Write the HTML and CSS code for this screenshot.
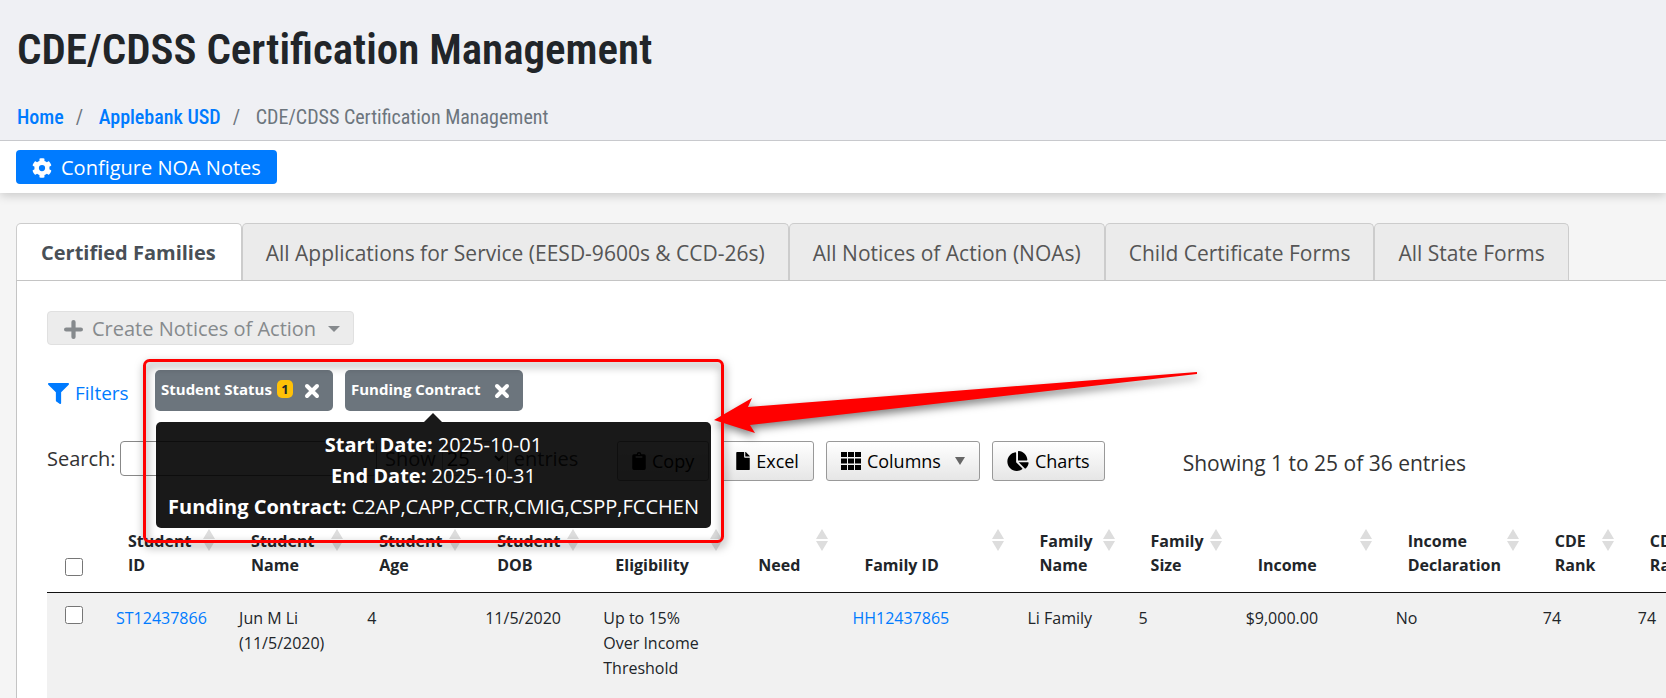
FILE: index.html
```html
<!DOCTYPE html>
<html lang="en">
	<head>
		<meta charset="utf-8">
		<title>CDE/CDSS Certification Management</title>
		<link rel="stylesheet" href="styles.css">
	</head>
	<body>
		<header class="page-head">
			<h1>CDE/CDSS Certification Management</h1>
			<nav class="breadcrumb">
				<a href="#">Home</a>
				<span class="slash">/</span>
				<a href="#">Applebank USD</a>
				<span class="slash">/</span>
				<span>CDE/CDSS Certification Management</span>
			</nav>
		</header>
		<div class="toolbar">
			<button type="button" class="btn btn-primary">
				<svg class="icon-gear" viewBox="0 0 512 512"><path fill="currentColor" d="M487 316l-43-25a194 194 0 0 0 0-70l43-25c5-3 7-9 6-14-11-36-30-69-55-95-4-5-10-6-15-3l-43 25a192 192 0 0 0-61-35V24c0-6-4-11-9-12-37-8-75-8-110 0-5 1-9 6-9 12v50a194 194 0 0 0-61 35L87 84c-5-3-11-2-15 3-25 26-44 59-55 95-2 5 0 11 5 14l43 25a194 194 0 0 0 0 70l-43 25c-5 3-7 9-5 14 11 36 30 69 55 95 4 5 10 6 15 3l43-25c18 15 38 27 61 35v50c0 6 4 11 9 12 37 8 75 8 110 0 5-1 9-6 9-12v-50a194 194 0 0 0 61-35l43 25c5 3 11 2 15-3 25-26 44-59 55-95 1-5-1-11-6-14zM256 336a80 80 0 1 1 0-160 80 80 0 0 1 0 160z"/></svg>
				Configure NOA Notes
			</button>
		</div>
		<main class="content">
			<nav class="tabs">
				<a href="#" class="tab active">Certified Families</a>
				<a href="#" class="tab">All Applications for Service (EESD-9600s &amp; CCD-26s)</a>
				<a href="#" class="tab">All Notices of Action (NOAs)</a>
				<a href="#" class="tab">Child Certificate Forms</a>
				<a href="#" class="tab">All State Forms</a>
			</nav>
			<section class="panel">
				<button type="button" class="btn btn-create" disabled>
					<svg class="icon-plus" viewBox="0 0 18 18"><path fill="none" stroke="currentColor" stroke-width="4" stroke-linecap="round" d="M9 2v14M2 9h14"/></svg>
					Create Notices of Action
					<span class="caret"></span>
				</button>
				<div class="filters">
					<a href="#" class="filter-link">
						<svg class="icon-filter" viewBox="0 0 512 512"><path fill="currentColor" d="M488 0H24C3 0-8 26 7 41l185 185v206c0 8 4 15 10 20l80 55c16 11 38 0 38-19V226L505 41c15-15 4-41-17-41z"/></svg>
						Filters
					</a>
					<span class="chip">
						Student Status <span class="count">1</span>
						<button type="button" class="chip-x" aria-label="Remove Student Status"><svg viewBox="0 0 16 16"><path fill="none" stroke="currentColor" stroke-width="4" stroke-linecap="round" d="M3 3l10 10M13 3L3 13"/></svg></button>
					</span>
					<span class="chip">
						Funding Contract
						<button type="button" class="chip-x" aria-label="Remove Funding Contract"><svg viewBox="0 0 16 16"><path fill="none" stroke="currentColor" stroke-width="4" stroke-linecap="round" d="M3 3l10 10M13 3L3 13"/></svg></button>
						<span class="tooltip" role="tooltip">
							<b>Start Date:</b> 2025-10-01<br>
							<b>End Date:</b> 2025-10-31<br>
							<b>Funding Contract:</b> C2AP,CAPP,CCTR,CMIG,CSPP,FCCHEN
						</span>
					</span>
				</div>
				<div class="controls">
					<label class="search">Search: <input type="text"></label>
					<label class="length">Show
						<select><option>25</option><option>50</option><option>100</option></select>
						entries</label>
					<div class="dt-buttons">
						<button type="button" class="dt-btn">
							<svg class="icon-doc" viewBox="0 0 384 512"><path fill="currentColor" fill-rule="evenodd" d="M336 64h-80a64 64 0 0 0-128 0H48a48 48 0 0 0-48 48v352a48 48 0 0 0 48 48h288a48 48 0 0 0 48-48V112a48 48 0 0 0-48-48zM192 40a24 24 0 1 1 0 48 24 24 0 0 1 0-48zM96 124h192v36H96z"/></svg>
							Copy
						</button>
						<button type="button" class="dt-btn">
							<svg class="icon-doc" viewBox="0 0 384 512"><path fill="currentColor" d="M224 136V0H24A24 24 0 0 0 0 24v464a24 24 0 0 0 24 24h336a24 24 0 0 0 24-24V160H248a24 24 0 0 1-24-24zM384 122v6H256V0h6c6 0 12 3 17 7l98 98c4 4 7 10 7 17z"/></svg>
							Excel
						</button>
						<button type="button" class="dt-btn">
							<svg class="icon-grid" viewBox="0 0 20 18"><path fill="currentColor" d="M0 0h6v5H0zM7 0h6v5H7zM14 0h6v5h-6zM0 6.500h6v5H0zM7 6.500h6v5H7zM14 6.500h6v5h-6zM0 13h6v5H0zM7 13h6v5H7zM14 13h6v5h-6z"/></svg>
							Columns
							<span class="down"></span>
						</button>
						<button type="button" class="dt-btn">
							<svg class="icon-pie" viewBox="0 0 544 512"><path fill="currentColor" d="M528 288H290l158 158c6 6 16 7 22 1 39-36 66-86 74-141 1-10-6-18-16-18zM512 223C504 103 409 8 289 0c-9-1-17 7-17 16v224h224c9 0 17-8 16-17zM224 288V50c0-10-8-17-18-16C87 51 -4 156 0 281c5 128 114 232 243 231 50-1 97-17 135-44 8-6 9-17 2-24z"/></svg>
							Charts
						</button>
					</div>
					<span class="info">Showing 1 to 25 of 36 entries</span>
				</div>
				<table class="grid">
					<colgroup>
						<col class="w-check"><col class="w-sid"><col class="w-name"><col class="w-age"><col class="w-age"><col class="w-elig"><col class="w-need"><col class="w-fid"><col class="w-fname"><col class="w-size"><col class="w-inc"><col class="w-decl"><col class="w-rank"><col class="w-rank">
					</colgroup>
					<thead>
						<tr>
							<th class="check"><input type="checkbox" aria-label="Select all"></th>
							<th class="sort">Student ID</th>
							<th class="sort">Student Name</th>
							<th class="sort">Student Age</th>
							<th class="sort">Student DOB</th>
							<th class="sort">Eligibility</th>
							<th class="sort">Need</th>
							<th class="sort">Family ID</th>
							<th class="sort">Family Name</th>
							<th class="sort">Family Size</th>
							<th class="sort">Income</th>
							<th class="sort">Income Declaration</th>
							<th class="sort">CDE Rank</th>
							<th class="sort">CDSS Rank</th>
						</tr>
					</thead>
					<tbody>
						<tr>
							<td class="check"><input type="checkbox" aria-label="Select ST12437866"></td>
							<td><a href="#">ST12437866</a></td>
							<td>Jun M Li (11/5/2020)</td>
							<td>4</td>
							<td>11/5/2020</td>
							<td>Up to 15% Over Income Threshold</td>
							<td></td>
							<td><a href="#">HH12437865</a></td>
							<td>Li Family</td>
							<td>5</td>
							<td>$9,000.00</td>
							<td>No</td>
							<td>74</td>
							<td>74</td>
						</tr>
					</tbody>
				</table>
				<!-- red callout over the filters -->
				<svg class="callout" width="1080" height="200" viewBox="0 0 1080 200">
					<rect x="7.500" y="7.500" width="578" height="181" rx="5" fill="none" stroke="#f00" stroke-width="3"/>
					<path fill="#f00" d="M577 67L615 45L611 54L1060 19V21L613 72L618 80Z"/>
				</svg>
			</section>
		</main>
	</body>
</html>
```

FILE: styles.css
```css
* {
	box-sizing: border-box;
}

body {
	margin: 0;
	background-color: #f5f5f5;
	color: #212529;
	font-family: "Segoe UI", "Open Sans", "Noto Sans", sans-serif;
	font-size: 20px;
	line-height: 30px;
	overflow: hidden;
}

a {
	color: #007bff;
	text-decoration: none;
}

button, input, select {
	font: inherit;
}

.page-head {
	position: relative;
	z-index: 1;
	padding: 20px 17px 8px;
	background-color: #eff0f4;
	border-bottom: 1px solid #c8c9cd;
	font-family: "Roboto Condensed", "Liberation Sans Narrow", Roboto, sans-serif;
}

h1 {
	margin: 0 0 24px;
	font-size: 43px;
	font-weight: 600;
	line-height: 58px;
}

.breadcrumb {
	display: flex;
	color: #6c757d;
}

.breadcrumb a {
	font-weight: 500;
}

.slash {
	width: 35px;
	padding-left: 12px;
}

.toolbar {
	position: relative;
	padding: 9px 16px;
	background-color: #fff;
	box-shadow: 0 2px 10px rgba(0, 0, 0, .2);
}

.btn {
	display: flex;
	align-items: center;
	height: 34px;
	padding: 2px 16px 0;
	border: 0;
	border-radius: 4px;
}

.btn-primary {
	background-color: #007bff;
	color: #fff;
}

.icon-gear {
	width: 20px;
	height: 20px;
	margin-right: 9px;
}

.content {
	padding: 30px 0 0 16px;
}

.tabs {
	display: flex;
	white-space: nowrap;
}

.tab {
	height: 57px;
	padding: 14px 23px;
	border: 1px solid #ccc;
	border-bottom: 0;
	border-radius: 5px 5px 0 0;
	background-color: #ebebeb;
	color: #555;
	font-size: 21px;
}

.tab.active {
	position: relative;
	height: 58px;
	margin-bottom: -1px;
	padding: 14px 25px 14px 24px;
	background-color: #fff;
	color: #495057;
	font-size: 20px;
	font-weight: bold;
}

.panel {
	position: relative;
	padding: 30px 0 0 30px;
	border-top: 1px solid #c4c4c4;
	border-left: 1px solid #c4c4c4;
	background-color: #fff;
}

.btn-create {
	padding: 2px 13px 0 16px;
	border: 1px solid #e0e0e0;
	background-color: #ececec;
	color: #868a8d;
}

.icon-plus {
	width: 19px;
	height: 19px;
	margin-right: 9px;
}

.caret {
	margin-left: 12px;
	border: 6px solid transparent;
	border-top-color: currentColor;
	border-bottom: 0;
}

.filters {
	display: flex;
	align-items: flex-start;
	gap: 12px;
	margin-top: 25px;
}

.filter-link {
	display: flex;
	align-items: center;
	gap: 6px;
	width: 96px;
	margin-top: 8px;
	padding-left: 1px;
	font-size: 19px;
}

.icon-filter {
	width: 21px;
	height: 21px;
}

.chip {
	position: relative;
	display: flex;
	align-items: center;
	width: 178px;
	height: 41px;
	padding: 0 13px 4px 6px;
	border-radius: 5px;
	background-color: #6c757d;
	color: #fff;
	font-size: 15px;
	font-weight: bold;
	white-space: nowrap;
}

.count {
	width: 16px;
	height: 18px;
	margin-left: 5px;
	border-radius: 5px;
	background-color: #ffc107;
	color: #212529;
	font-size: 13px;
	line-height: 18px;
	text-align: center;
}

.chip-x {
	display: flex;
	margin-left: auto;
	padding: 4px 0 0;
	border: 0;
	background: none;
	color: #fff;
}

.chip-x svg {
	width: 16px;
	height: 16px;
}

.tooltip {
	position: absolute;
	z-index: 2;
	top: 52px;
	left: -189px;
	width: 555px;
	padding: 7px 0 6px;
	border-radius: 5px;
	background-color: rgba(0, 0, 0, .9);
	font-size: 20px;
	font-weight: normal;
	line-height: 31px;
	text-align: center;
}

.tooltip::before {
	content: "";
	position: absolute;
	bottom: 100%;
	left: 268px;
	border: 9px solid transparent;
	border-top: 0;
	border-bottom-color: rgba(0, 0, 0, .9);
}

.controls {
	display: flex;
	align-items: flex-start;
	margin-top: 30px;
	color: #333;
	white-space: nowrap;
}

.search {
	display: flex;
	align-items: center;
	justify-content: space-between;
	width: 330px;
}

.search input {
	width: 257px;
	height: 35px;
	border: 1px solid #888;
	border-radius: 4px;
}

.length {
	display: flex;
	align-items: center;
	gap: 6px;
	width: 240px;
	padding-left: 8px;
}

.length select {
	width: 66px;
	height: 35px;
	border: 1px solid #aaa;
	border-radius: 4px;
	background-color: transparent;
}

.dt-buttons {
	display: flex;
	gap: 12px;
}

.dt-btn {
	display: flex;
	align-items: center;
	gap: 6px;
	height: 40px;
	padding: 0 14px;
	border: 1px solid #999;
	border-radius: 3px;
	background: linear-gradient(#fff, #e6e6e6);
	color: #000;
	font-size: 18px;
}

.icon-doc {
	width: 14px;
	height: 18px;
}

.icon-grid {
	width: 20px;
	height: 18px;
}

.icon-pie {
	width: 22px;
	height: 20px;
}

.down {
	margin-left: 8px;
	border: 5px solid transparent;
	border-top: 8px solid #666;
	border-bottom: 0;
}

.info {
	margin: 7px 0 0 78px;
	font-size: 21px;
}

.grid {
	width: 1674px;
	margin-top: 40px;
	border-collapse: collapse;
	table-layout: fixed;
	font-size: 16px;
	line-height: 24px;
}

.grid th {
	position: relative;
	padding: 8px 24px 15px;
	border-bottom: 1px solid #111;
	text-align: left;
	vertical-align: bottom;
}

.grid td {
	height: 105px;
	padding: 13px 24px 6px 12px;
	background-color: #f1f1f1;
	line-height: 25px;
	vertical-align: top;
}

.grid .check {
	padding-left: 18px;
	padding-right: 0;
}

.check input {
	display: block;
	width: 18px;
	height: 18px;
	margin: 0 0 1px;
}

.sort::before,
.sort::after {
	content: "";
	position: absolute;
	right: 12px;
	border: 6px solid transparent;
}

.sort::before {
	top: 8px;
	border-top: 0;
	border-bottom: 10px solid #ddd;
}

.sort::after {
	top: 20px;
	border-bottom: 0;
	border-top: 10px solid #ddd;
}

.w-check { width: 57px; }
.w-sid { width: 123px; }
.w-name { width: 128px; }
.w-age { width: 118px; }
.w-elig { width: 143px; }
.w-need { width: 106px; }
.w-fid { width: 175px; }
.w-fname { width: 111px; }
.w-size { width: 107px; }
.w-inc { width: 150px; }
.w-decl { width: 147px; }
.w-rank { width: 95px; }

.callout {
	position: absolute;
	z-index: 3;
	top: 72px;
	left: 120px;
	filter: drop-shadow(1px 4px 4px rgba(0, 0, 0, .5));
	pointer-events: none;
}
```
